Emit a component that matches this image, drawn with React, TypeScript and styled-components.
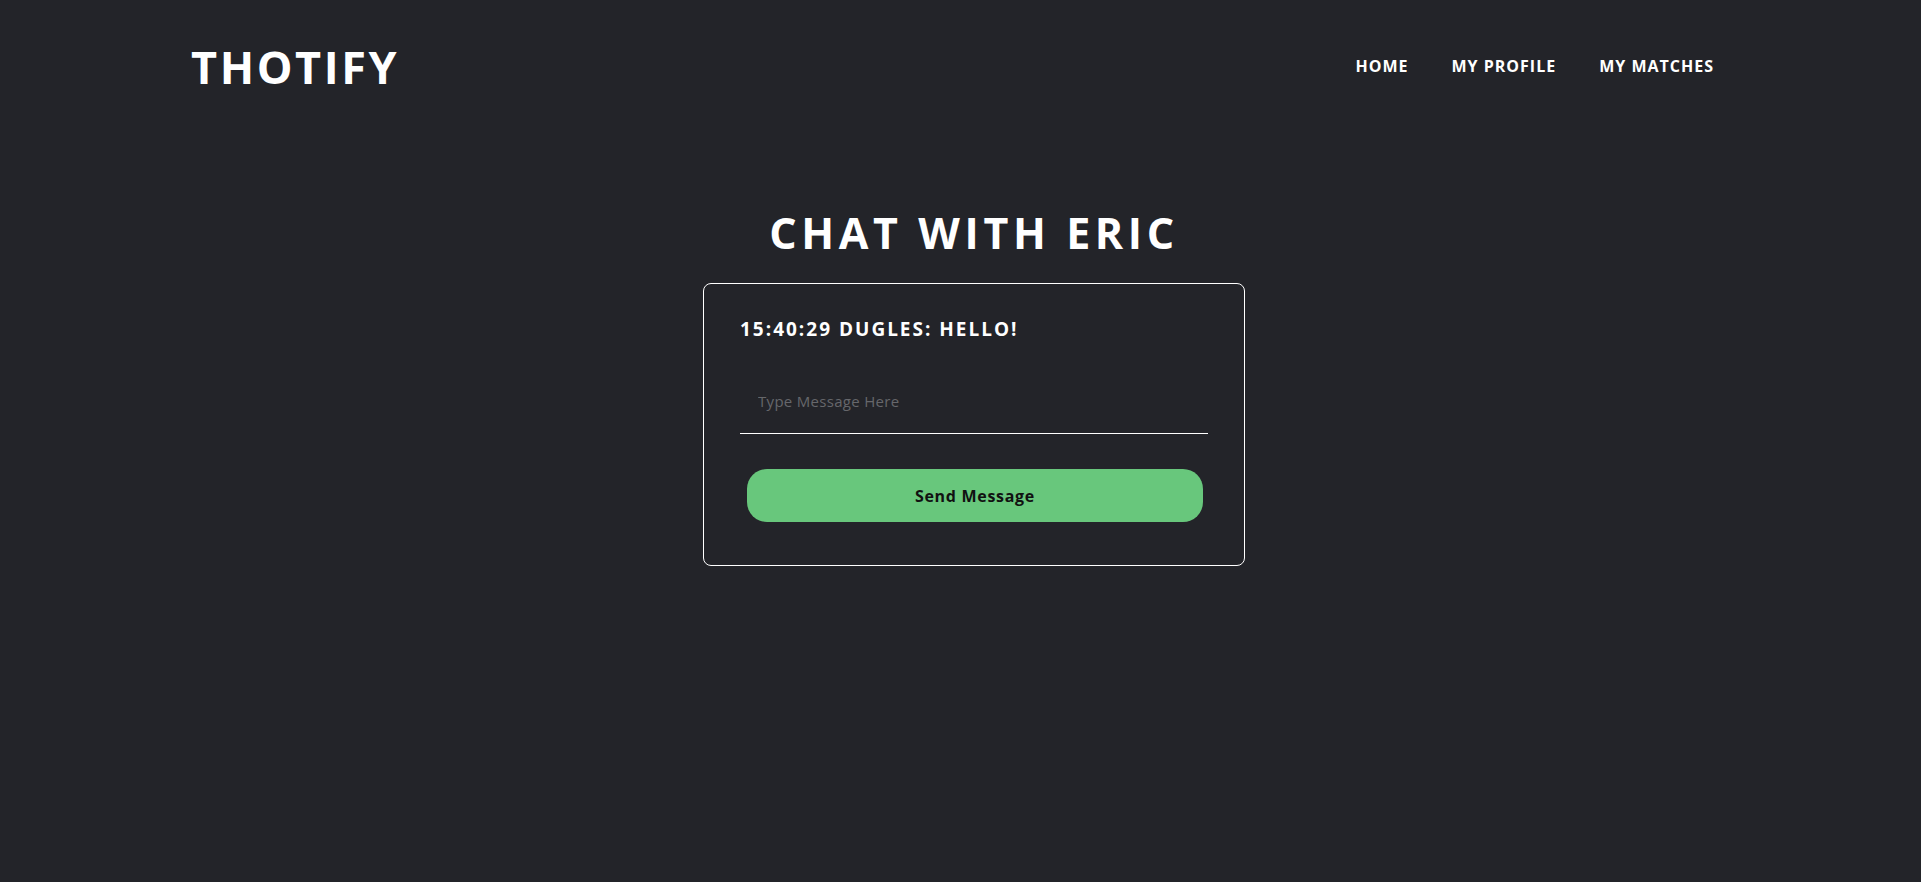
import React from "react";
import styled, { createGlobalStyle } from "styled-components";

const GlobalStyle = createGlobalStyle`
  html, body {
    margin: 0;
    padding: 0;
    background: #232429;
  }
  body {
    font-family: "Open Sans", "Liberation Sans", sans-serif;
    color: #ffffff;
  }
  * { box-sizing: border-box; }
`;

const Page = styled.div`
  min-height: 882px;
  background: #232429;
`;

const Header = styled.header`
  height: 132px;
  display: flex;
  align-items: center;
  justify-content: space-between;
  padding: 0 207px 0 191px;
`;

const Logo = styled.div`
  font-size: 45px;
  line-height: 1;
  font-weight: 700;
  letter-spacing: 2.6px;
  color: #ffffff;
`;

const Nav = styled.nav`
  display: flex;
  align-items: center;
  gap: 43px;
`;

const NavLink = styled.a`
  font-size: 16px;
  line-height: 1;
  font-weight: 700;
  letter-spacing: 1px;
  color: #ffffff;
  text-decoration: none;
  cursor: pointer;
`;

const Main = styled.main`
  display: flex;
  flex-direction: column;
  align-items: center;
  padding-left: 27px;
  padding-top: 79px;
`;

const Title = styled.h1`
  margin: 0;
  font-size: 43px;
  line-height: 1;
  font-weight: 700;
  letter-spacing: 4.6px;
  color: #ffffff;
`;

const Card = styled.section`
  margin-top: 29px;
  width: 542px;
  border: 1px solid #ffffff;
  border-radius: 8px;
  padding: 36px 36px 43px 36px;
  display: flex;
  flex-direction: column;
`;

const Message = styled.div`
  font-size: 19px;
  line-height: 1;
  font-weight: 700;
  letter-spacing: 2px;
  color: #ffffff;
`;

const Input = styled.input`
  margin-top: 30px;
  height: 65px;
  width: 100%;
  background: transparent;
  border: none;
  border-bottom: 1px solid #ffffff;
  padding: 0 0 0 18px;
  font-family: "Open Sans", "Liberation Sans", sans-serif;
  font-size: 15px;
  letter-spacing: 0.3px;
  color: #ffffff;
  outline: none;
  &::placeholder {
    color: #66676b;
  }
`;

const SendButton = styled.button`
  margin: 35px 5px 0 7px;
  height: 53px;
  border: none;
  border-radius: 20px;
  background: #68c77c;
  color: #111111;
  font-family: "Open Sans", "Liberation Sans", sans-serif;
  font-size: 16px;
  font-weight: 700;
  letter-spacing: 0.7px;
  cursor: pointer;
`;

export default function App() {
  return (
    <Page>
      <GlobalStyle />
      <Header>
        <Logo>THOTIFY</Logo>
        <Nav>
          <NavLink>HOME</NavLink>
          <NavLink>MY PROFILE</NavLink>
          <NavLink>MY MATCHES</NavLink>
        </Nav>
      </Header>
      <Main>
        <Title>CHAT WITH ERIC</Title>
        <Card>
          <Message>15:40:29 DUGLES: HELLO!</Message>
          <Input placeholder="Type Message Here" />
          <SendButton>Send Message</SendButton>
        </Card>
      </Main>
    </Page>
  );
}
